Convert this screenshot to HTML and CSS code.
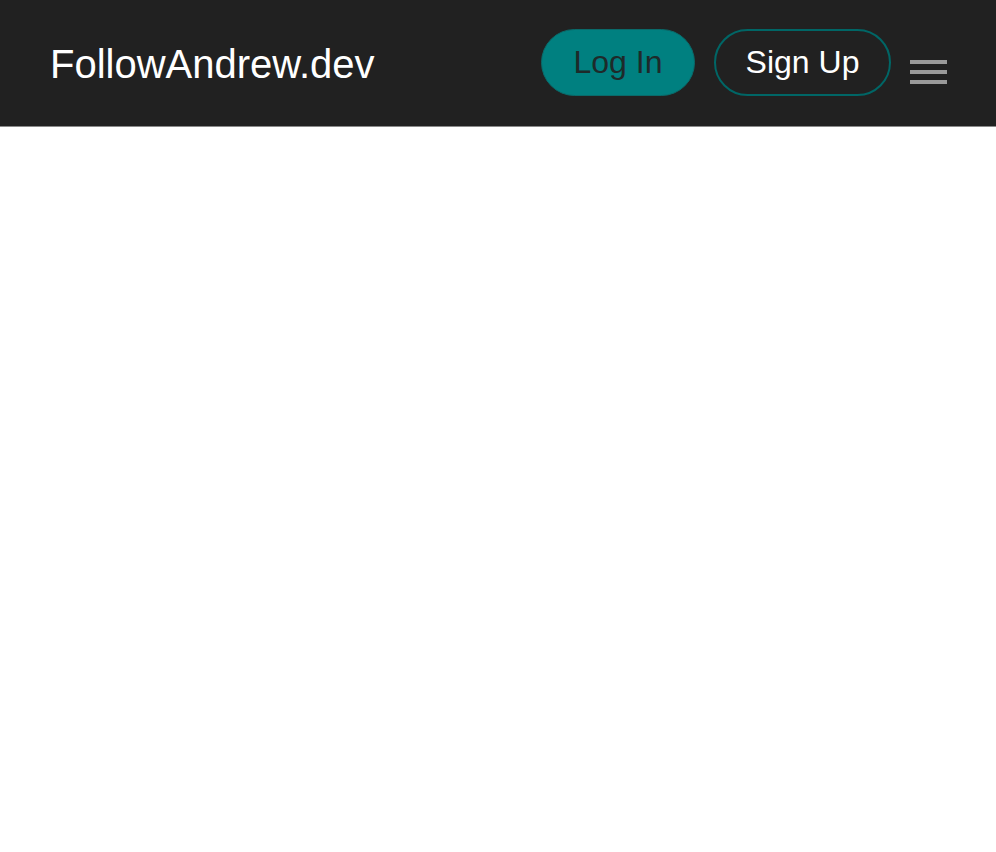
FILE: index.html
```html
<!DOCTYPE html>
<html>
<head>
<meta charset="utf-8">
<link rel="stylesheet" href="styles.css">
</head>
<body>
<header class="navbar">
  <div class="brand">FollowAndrew.dev</div>
  <div class="actions">
    <button class="btn btn-login">Log In</button>
    <button class="btn btn-signup">Sign Up</button>
    <div class="hamburger"><span></span><span></span><span></span></div>
  </div>
</header>
<main class="content"></main>
</body>
</html>
```
FILE: styles.css
```css
html, body { margin: 0; padding: 0; background: #fff; }
body { font-family: "Liberation Sans", Arial, sans-serif; }
.navbar {
  height: 126px;
  background: #212121;
  border-bottom: 1px solid #8a8a8a;
  display: flex;
  align-items: center;
  justify-content: space-between;
  padding: 0 49px 0 50px;
  box-sizing: content-box;
}
.brand { color: #fff; font-size: 40px; margin-top: 2px; }
.actions { display: flex; align-items: center; margin-top: -1px; }
.btn {
  font-family: "Liberation Sans", Arial, sans-serif;
  font-size: 32px;
  height: 67px;
  border-radius: 34px;
  box-sizing: border-box;
  padding: 0;
  white-space: nowrap;
  cursor: pointer;
}
.btn-login { background: #008080; color: #1e2a2a; border: 1px solid #0a6a6a; margin-right: 19px; width: 154px; }
.btn-signup { background: transparent; color: #fff; border: 2px solid #066; width: 177px; }
.hamburger { display: flex; flex-direction: column; gap: 6px; margin-left: 19px; margin-top: 18px; }
.hamburger span { display: block; width: 37px; height: 4px; background: #9a9a9a; }
.content { height: 700px; }
```
